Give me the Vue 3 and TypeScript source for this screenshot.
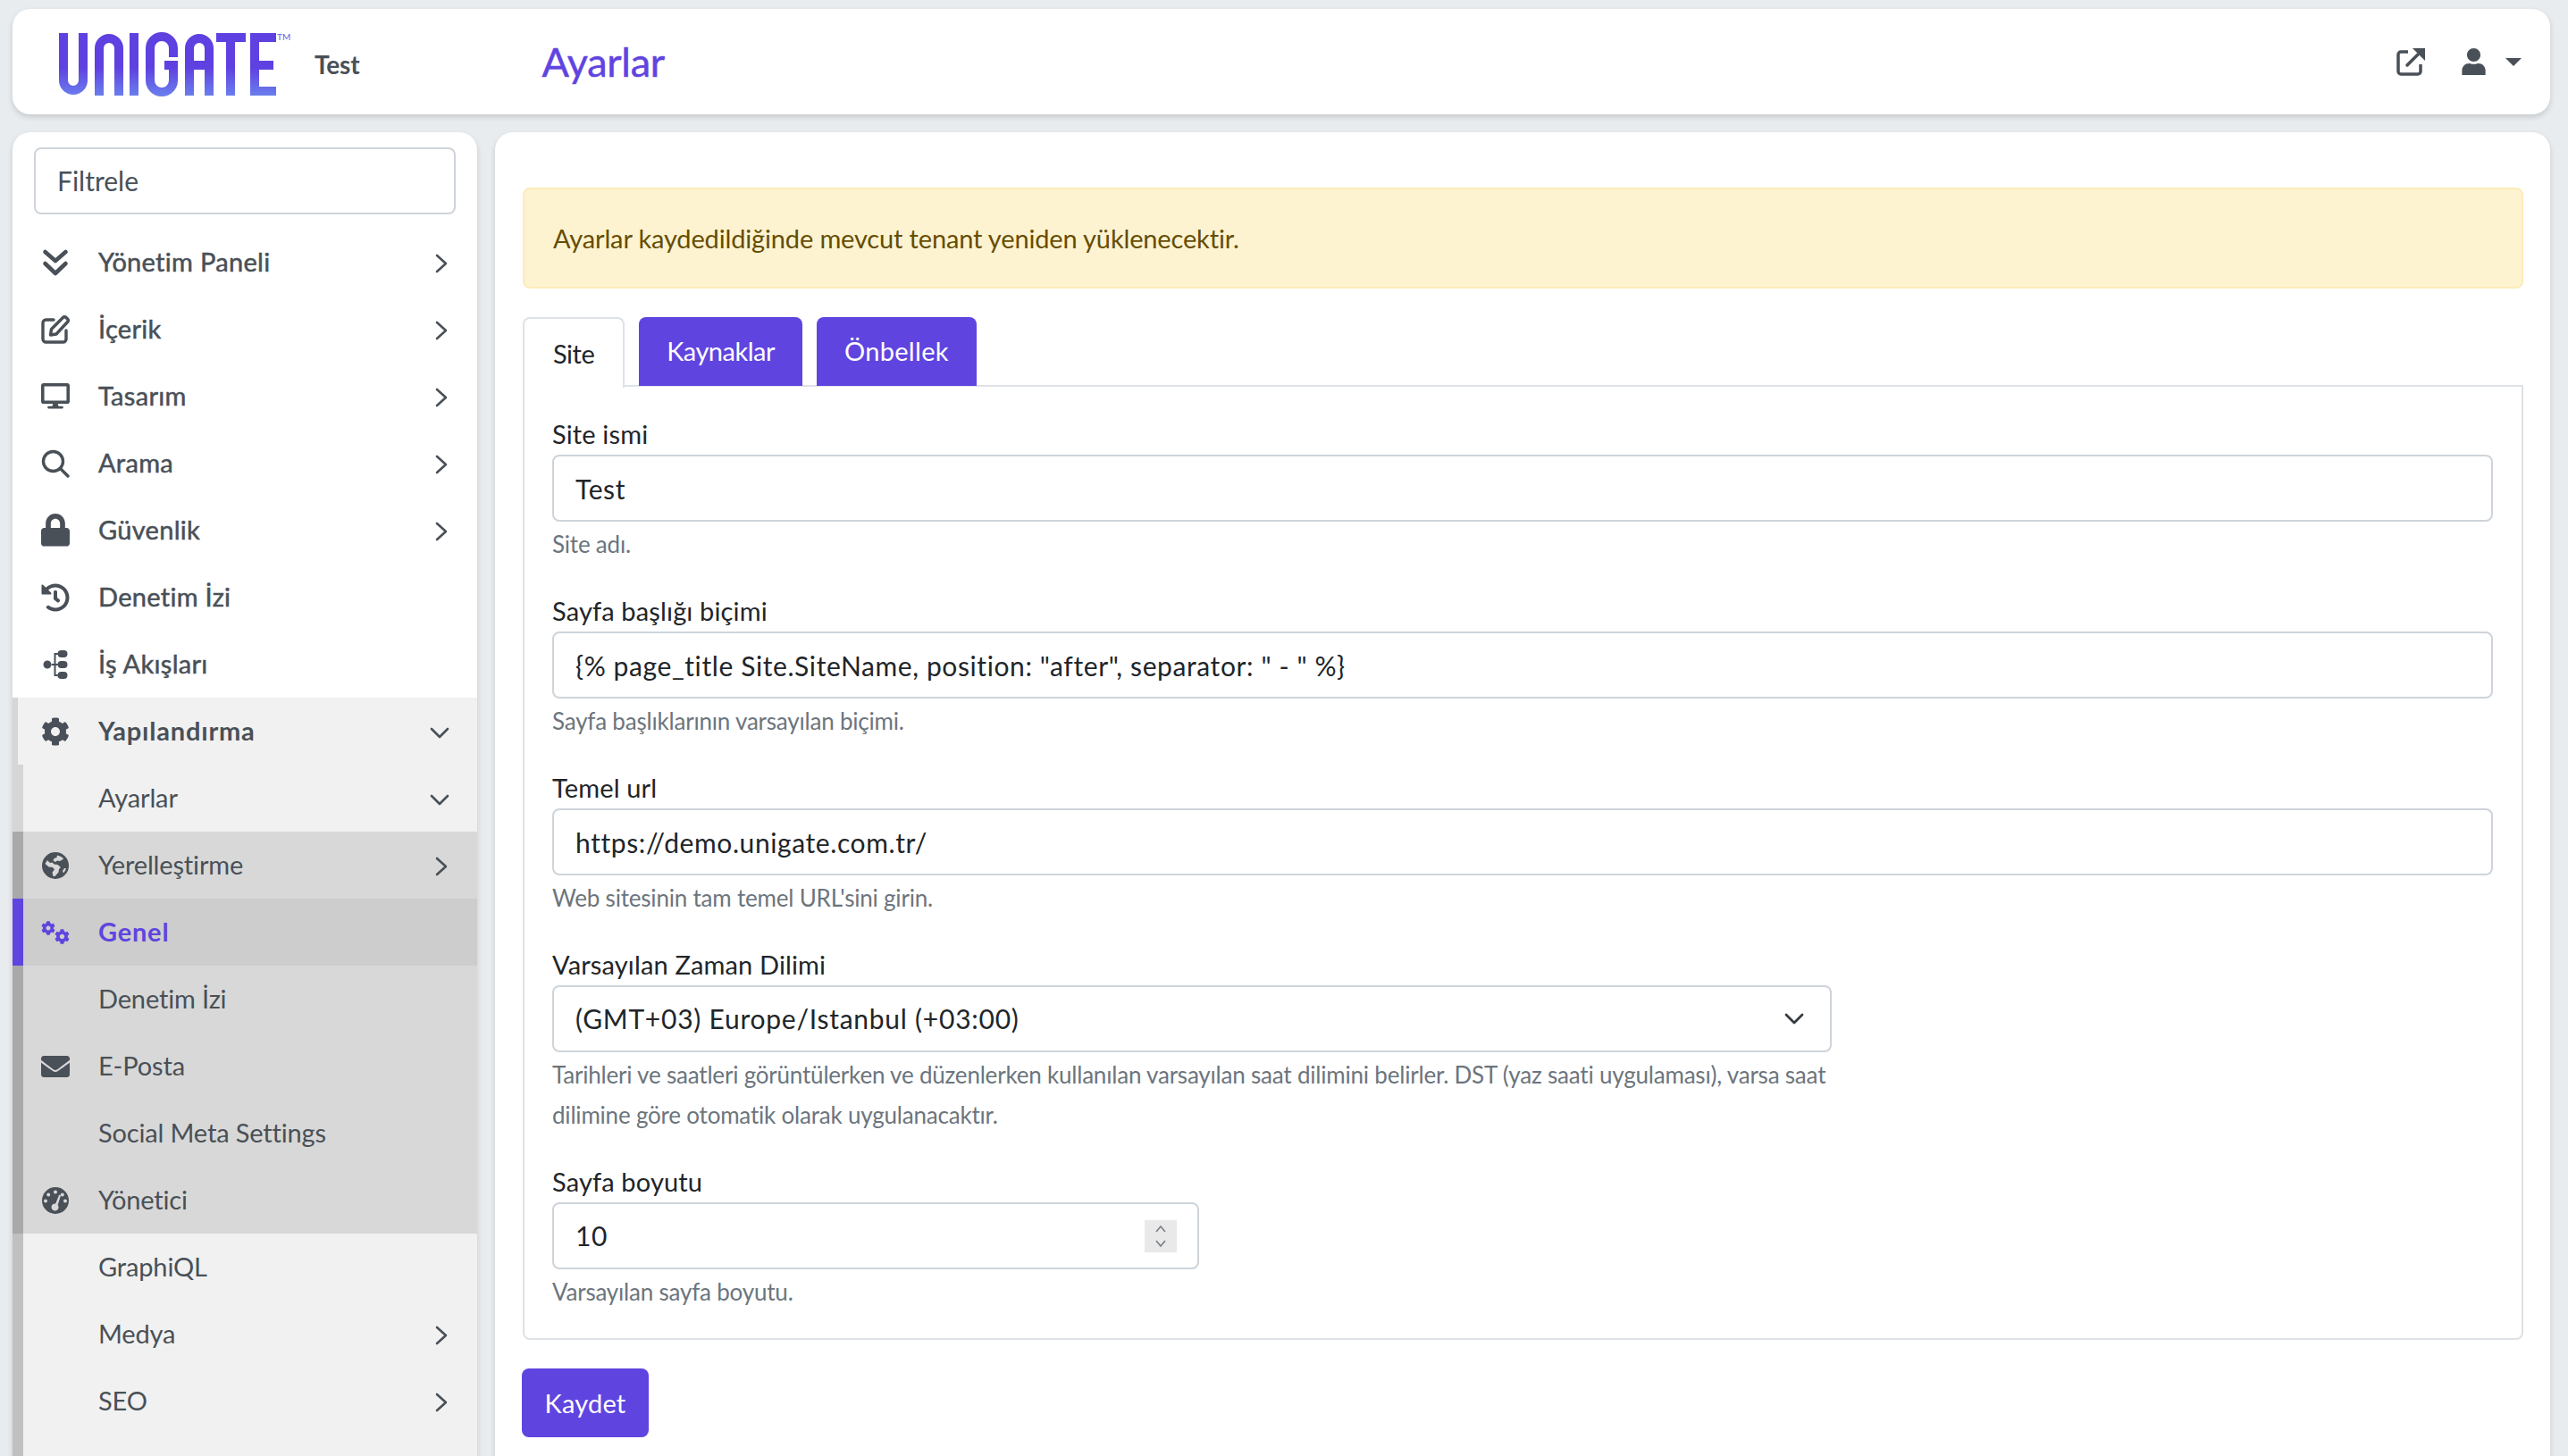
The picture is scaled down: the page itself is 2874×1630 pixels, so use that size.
<script setup lang="ts">
interface Icon {
  vb: string;
  d: string;
  line?: boolean;
  heavy?: boolean;
}

interface NavItem {
  label: string;
  icon?: string;
  arrow?: 'right' | 'down';
  depth?: 1 | 2;
  tone?: 'soft' | 'strong' | 'active' | 'pale';
  weight?: 'medium' | 'bold';
}

interface Field {
  label: string;
  value: string;
  help: string;
}

const cog =
  'M487.4 315.7l-42.6-24.6c4.3-23.2 4.3-47 0-70.2l42.6-24.6c4.9-2.8 7.1-8.6 5.5-14-11.1-35.6-30-67.8-54.7-94.6-3.8-4.1-10-5.1-14.8-2.3L380.8 110c-17.9-15.4-38.5-27.3-60.8-35.1V25.8c0-5.6-3.9-10.5-9.4-11.7-36.7-8.2-74.3-7.8-109.2 0-5.5 1.2-9.4 6.1-9.4 11.7V75c-22.2 7.9-42.8 19.8-60.8 35.1L88.7 85.5c-4.9-2.8-11-1.9-14.8 2.3-24.7 26.7-43.6 58.9-54.7 94.6-1.7 5.4.6 11.2 5.5 14L67.3 221c-4.3 23.2-4.3 47 0 70.2l-42.6 24.6c-4.9 2.8-7.1 8.6-5.5 14 11.1 35.6 30 67.8 54.7 94.6 3.8 4.1 10 5.1 14.8 2.3l42.6-24.6c17.9 15.4 38.5 27.3 60.8 35.1v49.2c0 5.6 3.9 10.5 9.4 11.7 36.7 8.2 74.3 7.8 109.2 0 5.5-1.2 9.4-6.1 9.4-11.7v-49.2c22.2-7.9 42.8-19.8 60.8-35.1l42.6 24.6c4.9 2.8 11 1.9 14.8-2.3 24.7-26.7 43.6-58.9 54.7-94.6 1.5-5.5-.7-11.3-5.6-14.1zM256 336c-44.1 0-80-35.9-80-80s35.9-80 80-80 80 35.9 80 80-35.9 80-80 80z';

const icons: Record<string, Icon> = {
  panel: { vb: '0 0 32 32', line: true, heavy: true, d: 'M4.500 4l11.500 10L27.500 4M4.500 17l11.500 11L27.500 17' },
  edit: {
    vb: '0 0 32 32',
    line: true,
    d: 'M14 5H5.500A3.500 3.500 0 0 0 2 8.500V26.500A3.500 3.500 0 0 0 5.500 30H24.500A3.500 3.500 0 0 0 28 26.500V17M10.500 22l1-6.500L24.500 2.500a2.500 2.500 0 0 1 3.500 0l1.500 1.500a2.500 2.500 0 0 1 0 3.500L17 21z',
  },
  desktop: {
    vb: '0 0 576 512',
    d: 'M528 0H48C21.500 0 0 21.500 0 48v320c0 26.500 21.500 48 48 48h192l-16 48h-72c-13.300 0-24 10.700-24 24s10.700 24 24 24h272c13.300 0 24-10.700 24-24s-10.700-24-24-24h-72l-16-48h192c26.500 0 48-21.500 48-48V48c0-26.500-21.500-48-48-48zm-16 352H64V64h448v288z',
  },
  search: { vb: '0 0 32 32', line: true, d: 'M13.500 2.500a11 11 0 1 0 0 22 11 11 0 0 0 0-22zM21.500 21.500l8.500 8.500' },
  lock: {
    vb: '0 0 448 512',
    d: 'M400 224h-24v-72C376 68.200 307.800 0 224 0S72 68.200 72 152v72H48c-26.500 0-48 21.500-48 48v192c0 26.500 21.500 48 48 48h352c26.500 0 48-21.500 48-48V272c0-26.500-21.500-48-48-48zm-104 0H152v-72c0-39.700 32.300-72 72-72s72 32.300 72 72v72z',
  },
  history: {
    vb: '0 0 512 512',
    d: 'M504 255.531c.253 136.640-111.180 248.372-247.820 248.468-59.015.042-113.223-20.530-155.822-54.911-11.077-8.940-11.905-25.541-1.839-35.607l11.267-11.267c8.609-8.609 22.353-9.551 31.891-1.984C173.062 425.135 212.781 440 256 440c101.705 0 184-82.311 184-184 0-101.705-82.311-184-184-184-48.814 0-93.149 18.969-126.068 49.932l50.754 50.754c10.080 10.080 2.941 27.314-11.313 27.314H24c-8.837 0-16-7.163-16-16V38.627c0-14.254 17.234-21.393 27.314-11.314l49.372 49.372C129.209 34.136 189.552 8 256 8c136.810 0 247.747 110.780 248 247.531zm-180.912 78.784l9.823-12.630c8.138-10.463 6.253-25.542-4.210-33.679L288 256.349V152c0-13.255-10.745-24-24-24h-16c-13.255 0-24 10.745-24 24v135.651l65.409 50.874c10.463 8.137 25.541 6.253 33.679-4.210z',
  },
  flows: {
    vb: '0 0 32 32',
    d: 'M7 11.500a4.500 4.500 0 1 1 0 9 4.500 4.500 0 0 1 0-9zM22.500 0h3a4 4 0 0 1 0 8h-3a4 4 0 0 1 0-8zM22.500 12h3a4 4 0 0 1 0 8h-3a4 4 0 0 1 0-8zM22.500 24h3a4 4 0 0 1 0 8h-3a4 4 0 0 1 0-8zM14.500 3h4v2h-2v10h2v2h-2v10h2v2h-4V17H11v-2h3.500z',
  },
  cog: { vb: '0 0 512 512', d: cog },
  globe: {
    vb: '0 0 32 32',
    d: 'M16 1a15 15 0 1 0 0 30 15 15 0 0 0 0-30zM18 4.500l-.500 2.500-3 1-1 2.500 2.500 1.500 2-1.500 3 .500 3.500-2 .500-1A12.500 12.500 0 0 0 18 4.500zM7 10l-2.500 4 4 3.500 4.500.500 2 2.500-2.500 3 1 4.500h2l4-4.500.500-3.500 2-2-3.500-3-4-.500-2-2-2.500.500zM26 19l-2 3 1 2.500A12.500 12.500 0 0 0 28 19z',
  },
  mail: {
    vb: '0 0 512 384',
    d: 'M502.300 126.800c3.900-3.100 9.700-.2 9.700 4.700V336c0 26.500-21.500 48-48 48H48c-26.500 0-48-21.500-48-48V131.600c0-5 5.700-7.800 9.700-4.700 22.400 17.400 52.100 39.500 154.100 113.600 21.100 15.400 56.700 47.800 92.200 47.600 35.700.3 72-32.800 92.300-47.600 102-74.100 131.600-96.300 154-113.700zM256 256c23.200.4 56.600-29.200 73.400-41.400 132.700-96.300 142.800-104.700 173.400-128.700 5.800-4.500 9.200-11.500 9.200-18.900V48c0-26.500-21.500-48-48-48H48C21.500 0 0 21.500 0 48v19c0 7.400 3.400 14.300 9.200 18.900 30.600 23.900 40.700 32.400 173.400 128.700 16.800 12.200 50.200 41.800 73.400 41.400z',
  },
  gauge: {
    vb: '0 0 32 32',
    d: 'M16 1a15 15 0 1 0 0 30 15 15 0 0 0 0-30zM16 4.500a2 2 0 1 1 0 4 2 2 0 0 1 0-4zM8.200 7.500a2 2 0 1 1 0 4 2 2 0 0 1 0-4zM23.800 7.500a2 2 0 1 1 0 4 2 2 0 0 1 0-4zM5 14.500a2 2 0 1 1 0 4 2 2 0 0 1 0-4zM27 14.500a2 2 0 1 1 0 4 2 2 0 0 1 0-4zM20.200 9.500l1.800.700-3.300 10.800a4 4 0 1 1-5.300-.9 4 4 0 0 1 2.800-.6z',
  },
};

const nav: NavItem[] = [
  { label: 'Yönetim Paneli', icon: 'panel', arrow: 'right', weight: 'medium' },
  { label: 'İçerik', icon: 'edit', arrow: 'right', weight: 'medium' },
  { label: 'Tasarım', icon: 'desktop', arrow: 'right', weight: 'medium' },
  { label: 'Arama', icon: 'search', arrow: 'right', weight: 'medium' },
  { label: 'Güvenlik', icon: 'lock', arrow: 'right', weight: 'medium' },
  { label: 'Denetim İzi', icon: 'history', weight: 'medium' },
  { label: 'İş Akışları', icon: 'flows', weight: 'medium' },
  { label: 'Yapılandırma', icon: 'cog', arrow: 'down', depth: 1, tone: 'pale', weight: 'bold' },
  { label: 'Ayarlar', arrow: 'down', depth: 2, tone: 'pale' },
  { label: 'Yerelleştirme', icon: 'globe', arrow: 'right', depth: 2, tone: 'soft' },
  { label: 'Genel', icon: 'cogs', depth: 2, tone: 'active', weight: 'bold' },
  { label: 'Denetim İzi', depth: 2, tone: 'soft' },
  { label: 'E-Posta', icon: 'mail', depth: 2, tone: 'soft' },
  { label: 'Social Meta Settings', depth: 2, tone: 'soft' },
  { label: 'Yönetici', icon: 'gauge', depth: 2, tone: 'soft' },
  { label: 'GraphiQL', depth: 2, tone: 'strong' },
  { label: 'Medya', arrow: 'right', depth: 2, tone: 'strong' },
  { label: 'SEO', arrow: 'right', depth: 2, tone: 'strong' },
];

const fields: Field[] = [
  { label: 'Site ismi', value: 'Test', help: 'Site adı.' },
  {
    label: 'Sayfa başlığı biçimi',
    value: '{% page_title Site.SiteName, position: "after", separator: " - " %}',
    help: 'Sayfa başlıklarının varsayılan biçimi.',
  },
  { label: 'Temel url', value: 'https://demo.unigate.com.tr/', help: "Web sitesinin tam temel URL'sini girin." },
];

const tabs = ['Site', 'Kaynaklar', 'Önbellek'];
</script>

<template>
  <div class="app">
    <header class="topbar">
      <svg class="logo" width="270" height="84" viewBox="0 0 270 84" aria-label="Unigate">
        <defs>
          <linearGradient id="logo-fill" gradientUnits="userSpaceOnUse" x1="0" y1="7" x2="0" y2="77">
            <stop offset="0.55" stop-color="#5f40e0" />
            <stop offset="1" stop-color="#6a7eed" />
          </linearGradient>
        </defs>
        <g fill="none" stroke="url(#logo-fill)" stroke-width="10">
          <path d="M11 7V60a11 11 0 0 0 22 0V7" />
          <path d="M51 77V24a11 11 0 0 1 22 0V77" />
          <path d="M90 7V77" />
          <path d="M134 34V24a12 12 0 0 0-26 0V60a12 12 0 0 0 26 0V43H124" />
          <path d="M152 77V24a11 11 0 0 1 22 0V77M152 43H174" />
          <path d="M182 12H215M198 12V77" />
          <path d="M249 12H225V72H249M225 43H246" />
        </g>
        <text class="tm" x="250" y="15">TM</text>
      </svg>
      <span class="site-name">Test</span>
      <h1 class="page-title">Ayarlar</h1>
      <div class="top-actions">
        <svg class="top-link" viewBox="0 0 32 32" width="32" height="32">
          <path d="M13 5H5a3 3 0 0 0-3 3V27a3 3 0 0 0 3 3H24a3 3 0 0 0 3-3V19" fill="none" stroke="currentColor" stroke-width="3.500" />
          <path d="M12 20L24 8" fill="none" stroke="currentColor" stroke-width="3.500" stroke-linecap="round" />
          <path d="M18 1H32V15z" fill="currentColor" />
        </svg>
        <svg class="top-user" viewBox="0 0 448 512" width="27" height="30">
          <path fill="currentColor" d="M224 256c70.700 0 128-57.300 128-128S294.700 0 224 0 96 57.300 96 128s57.300 128 128 128zm89.600 32h-16.700c-22.200 10.200-46.900 16-72.900 16s-50.600-5.800-72.900-16h-16.700C60.200 288 0 348.200 0 422.400V512h448v-89.600c0-74.200-60.200-134.400-134.400-134.400z" />
        </svg>
        <span class="caret" />
      </div>
    </header>

    <aside class="sidebar">
      <div class="filter-wrap">
        <input class="filter" type="text" placeholder="Filtrele" />
      </div>
      <nav class="nav">
        <a
          v-for="item in nav"
          :key="item.label + item.tone"
          class="nav-row"
          :class="[item.tone, item.weight, item.depth ? `depth-${item.depth}` : '']"
        >
          <span class="nav-icon">
            <svg v-if="item.icon === 'cogs'" viewBox="0 0 32 26" width="32" height="26">
              <svg x="0" y="0" width="16" height="16" viewBox="0 0 512 512"><path fill="currentColor" :d="cog" /></svg>
              <svg x="15" y="9" width="17" height="17" viewBox="0 0 512 512"><path fill="currentColor" :d="cog" /></svg>
            </svg>
            <svg
              v-else-if="item.icon"
              :viewBox="icons[item.icon].vb"
              width="32"
              class="nav-svg"
            >
              <path
                v-if="icons[item.icon].line"
                :d="icons[item.icon].d"
                fill="none"
                stroke="currentColor"
                :stroke-width="icons[item.icon].heavy ? 4.6 : 3.4"
                stroke-linecap="round"
                stroke-linejoin="round"
              />
              <path v-else :d="icons[item.icon].d" fill="currentColor" fill-rule="evenodd" />
            </svg>
          </span>
          <span class="nav-label">{{ item.label }}</span>
          <svg v-if="item.arrow === 'right'" class="arrow-right" viewBox="0 0 14 22" width="14" height="22">
            <path d="M2 2l10 9-10 9" fill="none" stroke="currentColor" stroke-width="2.600" stroke-linecap="round" stroke-linejoin="round" />
          </svg>
          <svg v-else-if="item.arrow === 'down'" class="arrow-down" viewBox="0 0 22 14" width="22" height="14">
            <path d="M2 2l9 9 9-9" fill="none" stroke="currentColor" stroke-width="2.600" stroke-linecap="round" stroke-linejoin="round" />
          </svg>
        </a>
        <div class="nav-rest" />
      </nav>
    </aside>

    <main class="content">
      <div class="alert">Ayarlar kaydedildiğinde mevcut tenant yeniden yüklenecektir.</div>

      <div class="tabs">
        <button v-for="(tab, i) in tabs" :key="tab" class="tab" :class="{ current: i === 0 }">{{ tab }}</button>
      </div>

      <section class="tab-body">
        <div v-for="field in fields" :key="field.label" class="field">
          <label>{{ field.label }}</label>
          <input class="control" type="text" :value="field.value" />
          <small>{{ field.help }}</small>
        </div>

        <div class="field narrow">
          <label>Varsayılan Zaman Dilimi</label>
          <div class="control select">
            <span>(GMT+03) Europe/Istanbul (+03:00)</span>
            <svg viewBox="0 0 22 14" width="22" height="14">
              <path d="M2 2l9 9 9-9" fill="none" stroke="#343a40" stroke-width="2.800" stroke-linecap="round" stroke-linejoin="round" />
            </svg>
          </div>
          <small>Tarihleri ve saatleri görüntülerken ve düzenlerken kullanılan varsayılan saat dilimini belirler. DST (yaz saati uygulaması), varsa saat dilimine göre otomatik olarak uygulanacaktır.</small>
        </div>

        <div class="field number">
          <label>Sayfa boyutu</label>
          <div class="control number-box">
            <span>10</span>
            <span class="spinner">
              <svg viewBox="0 0 14 30" width="14" height="30">
                <path d="M2 10l5-6 5 6M2 20l5 6 5-6" fill="none" stroke="#7a7f85" stroke-width="1.600" />
              </svg>
            </span>
          </div>
          <small>Varsayılan sayfa boyutu.</small>
        </div>
      </section>

      <button class="save">Kaydet</button>
    </main>
  </div>
</template>

<style>
html,
body {
  margin: 0;
  background: #e9ecef;
}
</style>

<style scoped>
.app {
  box-sizing: border-box;
  width: 2874px;
  height: 1630px;
  overflow: hidden;
  padding: 10px 20px 0 14px;
  display: grid;
  grid-template-columns: 520px 1fr;
  grid-template-rows: 118px 1fr;
  gap: 20px;
  background: #e9ecef;
  color: #212529;
  font-family: Lato, "Noto Sans", sans-serif;
  font-size: 29px;
  line-height: 45px;
  letter-spacing: -0.15px;
}
.topbar {
  grid-column: 1 / 3;
  display: flex;
  align-items: center;
  padding: 0 32px 0 46px;
  background: #fff;
  border-radius: 20px;
  box-shadow: 0 3px 6px rgba(0, 0, 0, 0.15);
}
.logo {
  margin-top: 6px;
}
.tm {
  font-size: 10px;
  fill: #6a5be4;
  letter-spacing: 0;
}
.site-name {
  margin-left: 22px;
  margin-top: 6px;
  font-size: 28px;
  font-weight: 700;
  color: #495057;
}
.page-title {
  margin: 0 0 0 204px;
  font-size: 45px;
  font-weight: 400;
  letter-spacing: -0.3px;
  color: #6044e0;
  -webkit-text-stroke: 0.5px #6044e0;
}
.top-actions {
  margin-left: auto;
  display: flex;
  align-items: center;
  color: #495057;
}
.top-user {
  margin-left: 41px;
}
.caret {
  margin-left: 22px;
  border-top: 9px solid #495057;
  border-left: 9px solid transparent;
  border-right: 9px solid transparent;
}
.sidebar {
  background: #fff;
  border-radius: 20px 20px 0 0;
  box-shadow: 0 3px 6px rgba(0, 0, 0, 0.15);
  overflow: hidden;
  display: flex;
  flex-direction: column;
}
.filter-wrap {
  padding: 17px 24px 16px;
}
.filter {
  box-sizing: border-box;
  display: block;
  width: 100%;
  height: 75px;
  padding: 0 24px 2px;
  border: 2px solid #ced4da;
  border-radius: 8px;
  font: inherit;
  font-size: 30px;
  letter-spacing: 0px;
  color: #495057;
  outline: none;
}
.filter::placeholder {
  color: #495057;
  opacity: 1;
}
.nav {
  flex: 1;
  display: flex;
  flex-direction: column;
}
.nav-row {
  box-sizing: border-box;
  flex: none;
  height: 75px;
  display: flex;
  align-items: center;
  padding-left: 32px;
  padding-right: 33px;
  color: #495057;
}
.nav-row.depth-1 {
  border-left: 6px solid #d6d6d6;
  padding-left: 26px;
}
.nav-row.depth-2 {
  border-left: 12px solid #d6d6d6;
  padding-left: 20px;
}
.nav-row.pale {
  background: #f1f1f1;
}
.nav-row.soft {
  background: #d8d8d8;
  border-left-color: #a9a9a9;
}
.nav-row.active {
  background: #cdcdcd;
  border-left-color: #6044e0;
  color: #6044e0;
}
.nav-row.strong {
  background: #f1f1f1;
  border-left-color: #c0c0c0;
}
.nav-row.medium .nav-label {
  letter-spacing: 0.3px;
  -webkit-text-stroke: 0.5px currentColor;
}
.nav-row.bold .nav-label {
  font-weight: 700;
  letter-spacing: 0.8px;
}
.nav-icon {
  flex: none;
  width: 32px;
  display: flex;
  justify-content: center;
  margin-right: 32px;
}
.nav-svg {
  display: block;
}
.nav-label {
  flex: 1;
  padding-bottom: 3px;
}
.arrow-right {
  margin-top: 2px;
}
.arrow-down {
  margin-top: 4px;
  margin-right: -2px;
}
.nav-rest {
  flex: 1;
  border-left: 12px solid #c0c0c0;
  background: #f1f1f1;
}
.content {
  background: #fff;
  border-radius: 20px 20px 0 0;
  box-shadow: 0 3px 6px rgba(0, 0, 0, 0.15);
  padding: 62px 30px 0 31px;
}
.alert {
  box-sizing: border-box;
  height: 113px;
  display: flex;
  align-items: center;
  padding: 0 32px;
  background: #fdf3d1;
  border: 2px solid #fcecba;
  border-radius: 8px;
  color: #664d03;
}
.tabs {
  margin-top: 32px;
  display: flex;
  gap: 16px;
  height: 76px;
}
.tab {
  height: 77px;
  padding: 0 31px 3px;
  border: none;
  border-radius: 8px 8px 0 0;
  background: #6044e0;
  color: #fff;
  font: inherit;
  letter-spacing: -0.5px;
  position: relative;
  z-index: 1;
}
.tab:last-child {
  padding: 0 31px 3px;
  letter-spacing: 0.3px;
}
.tab.current {
  height: 79px;
  padding: 0 32px;
  background: #fff;
  color: #212529;
  border: 2px solid #dee2e6;
  border-bottom: none;
}
.tab-body {
  box-sizing: border-box;
  height: 1069px;
  padding: 30px 32px 0 31px;
  border: 2px solid #dee2e6;
  border-radius: 0 0 8px 8px;
}
.field {
  margin-bottom: 29px;
}
.field label {
  display: block;
  font-size: 29px;
  letter-spacing: 0.15px;
}
.field small {
  display: block;
  margin-top: 3px;
  font-size: 26px;
  letter-spacing: -0.2px;
  color: #6c757d;
}
.control {
  box-sizing: border-box;
  display: block;
  width: 100%;
  height: 75px;
  margin-top: 1px;
  padding: 0 24px;
  border: 2px solid #ced4da;
  border-radius: 8px;
  background: #fff;
  font: inherit;
  font-size: 30px;
  letter-spacing: 0.6px;
  color: #212529;
  outline: none;
}
.field.narrow {
  width: 1432px;
}
.field.number {
  width: 724px;
}
.select,
.number-box {
  display: flex;
  align-items: center;
  justify-content: space-between;
}
.select {
  padding-right: 29px;
  letter-spacing: 0.75px;
}
.number-box {
  padding-right: 23px;
}
.spinner {
  width: 36px;
  height: 36px;
  background: #e9e9e9;
  display: flex;
  align-items: center;
  justify-content: center;
}
.save {
  display: block;
  margin-top: 32px;
  margin-left: -1px;
  width: 142px;
  height: 77px;
  border: none;
  border-radius: 8px;
  background: #6044e0;
  color: #fff;
  font: inherit;
  letter-spacing: 0.2px;
}
</style>
